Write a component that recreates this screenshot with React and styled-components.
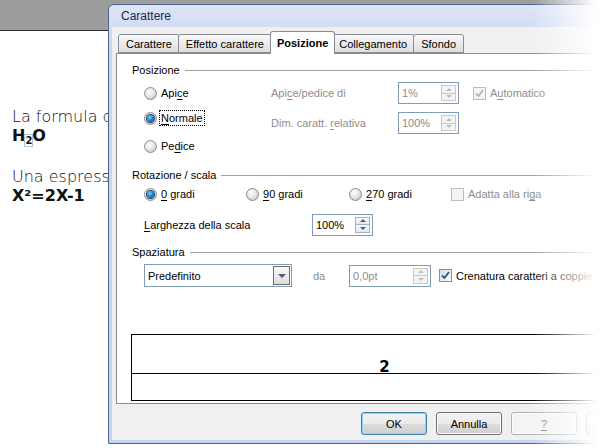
import React from 'react';
import styled, { createGlobalStyle } from 'styled-components';

const UI = '"Liberation Sans", Arial, sans-serif';

const GlobalStyle = createGlobalStyle`
  html, body { margin: 0; padding: 0; background: #fff; }
  body { width: 600px; height: 448px; overflow: hidden; }
  u { text-decoration: underline; text-underline-offset: 2px; }
`;

const Screen = styled.div`
  position: relative;
  width: 600px;
  height: 448px;
  overflow: hidden;
  background: #fff;
`;

const TopBar = styled.div`
  height: 30px;
  background: #9c9c9c;
  border-bottom: 1px solid #2e2e2e;
`;

const Doc = styled.div`
  padding: 76px 0 0 12px;
  font-family: "DejaVu Sans", sans-serif;
  font-size: 16px;
  font-weight: 200;
  color: #111;
`;

const Para = styled.div`
  margin-bottom: 17px;
  line-height: 19px;
  white-space: nowrap;
`;

const Formula = styled.div`
  font-weight: 700;
`;

const Sub = styled.span`
  font-size: 10px;
  vertical-align: -3px;
  outline: 1px solid #a9c4dc;
`;

const Fade = styled.div`
  position: absolute;
  top: 0;
  right: 0;
  width: 68px;
  height: 100%;
  pointer-events: none;
  background: linear-gradient(to right, rgba(255,255,255,0), #fff 95%);
`;

/* dialog window */
const Dialog = styled.div`
  position: absolute;
  left: 108px;
  top: 4px;
  width: 556px;
  height: 440px;
  box-sizing: border-box;
  display: flex;
  flex-direction: column;
  border: 1px solid #4f658c;
  border-radius: 6px 6px 0 0;
  background: linear-gradient(#dde5f7, #cad7f0 40px, #c6d4ef);
  padding: 0 3px 3px;
  font-family: ${UI};
  font-size: 11px;
  color: #000;
`;

const TitleBar = styled.div`
  height: 22px;
  display: flex;
  align-items: center;
  padding-left: 9px;
  font-size: 12px;
  color: #1b2a52;
`;

const Client = styled.div`
  flex: 1;
  background: #f0f0f0;
  padding: 4px 4px 0;
  display: flex;
  flex-direction: column;
`;

const Tabs = styled.div`
  height: 22px;
  display: flex;
  align-items: flex-end;
  padding-left: 2px;
  position: relative;
  z-index: 1;
`;

const Tab = styled.div`
  box-sizing: border-box;
  height: ${p => (p.$active ? 23 : 19)}px;
  margin-bottom: ${p => (p.$active ? -1 : 0)}px;
  margin-right: ${p => (p.$active ? -2 : 0)}px;
  padding: 0 ${p => (p.$active ? 6 : 7)}px;
  display: flex;
  align-items: center;
  border: 1px solid #898c95;
  border-bottom: ${p => (p.$active ? 'none' : '1px solid #898c95')};
  border-radius: 3px 3px 0 0;
  background: ${p => (p.$active ? '#fff' : 'linear-gradient(#fafafa, #ebebeb 50%, #dedede)')};
  font-weight: ${p => (p.$active ? 700 : 400)};
  position: relative;
  z-index: ${p => (p.$active ? 2 : 1)};
  & + & { margin-left: ${p => (p.$active ? -2 : -1)}px; }
`;

const Panel = styled.div`
  height: 351px;
  box-sizing: border-box;
  border: 1px solid #898c95;
  background: #fff;
  padding: 9px 15px 0;
  display: flex;
  flex-direction: column;
`;

const GroupHeader = styled.div`
  display: flex;
  align-items: center;
  gap: 5px;
  height: 14px;
  margin-top: ${p => p.$mt || 0}px;
`;

const Rule = styled.div`
  flex: 1;
  height: 1px;
  background: #a0a0a0;
`;

const PosBody = styled.div`
  display: flex;
  padding-left: 12px;
`;

const LeftCol = styled.div`
  width: 127px;
  display: flex;
  flex-direction: column;
`;

const OptionGrid = styled.div`
  display: grid;
  grid-template-columns: 127px 61px auto;
  grid-auto-rows: 22px;
  row-gap: 8px;
  align-items: center;
  padding-top: 5px;
`;

const Label = styled.span`
  color: ${p => (p.$disabled ? '#8d8d8d' : '#000')};
  white-space: nowrap;
`;

const RadioRow = styled.label`
  display: flex;
  align-items: center;
  gap: 4px;
  height: 16px;
  margin-top: ${p => p.$mt || 0}px;
  white-space: nowrap;
`;

const RadioDot = styled.span`
  width: 13px;
  height: 13px;
  box-sizing: border-box;
  border-radius: 50%;
  border: 1px solid #8b8b8b;
  background: radial-gradient(circle at 40% 35%, #ffffff 0, #e6e6e6 45%, #c9c9c9 80%);
  display: flex;
  align-items: center;
  justify-content: center;
  flex-shrink: 0;
  &::after {
    content: '';
    display: ${p => (p.$on ? 'block' : 'none')};
    width: 7px;
    height: 7px;
    border-radius: 50%;
    background: radial-gradient(circle at 40% 35%, #7fd3ff 0, #1f87d0 45%, #0c3f6e 100%);
    box-shadow: 0 0 0 1px #1d3c5c;
  }
`;

const Focus = styled.span`
  outline: 1px dotted #000;
  outline-offset: 1px;
`;

const CheckRow = styled.label`
  display: flex;
  align-items: center;
  gap: 4px;
  white-space: nowrap;
  margin-left: ${p => p.$ml || 0}px;
`;

const CheckBox = styled.span`
  width: 13px;
  height: 13px;
  box-sizing: border-box;
  border: 1px solid ${p => (p.$disabled ? '#bdbdbd' : '#8f8f8f')};
  background: ${p => (p.$disabled ? '#f4f4f4' : 'linear-gradient(135deg, #dcdcdc, #fbfbfb)')};
  display: flex;
  align-items: center;
  justify-content: center;
  flex-shrink: 0;
`;

const SpinField = styled.div`
  width: ${p => p.$w}px;
  height: 22px;
  box-sizing: border-box;
  border: 1px solid #7f9db9;
  background: #fff;
  display: flex;
  align-items: center;
  justify-content: space-between;
  padding: 2px 2px 2px 3px;
  color: ${p => (p.$disabled ? '#8d8d8d' : '#000')};
  flex-shrink: 0;
`;

const SpinButtons = styled.div`
  width: 15px;
  height: 16px;
  display: flex;
  flex-direction: column;
`;

const SpinHalf = styled.div`
  flex: 1;
  box-sizing: border-box;
  border: 1px solid ${p => (p.$disabled ? '#c9c9c9' : '#9fb0c8')};
  background: ${p => (p.$disabled ? '#f4f4f4' : 'linear-gradient(#fbfbfb, #e3e8f0)')};
  display: flex;
  align-items: center;
  justify-content: center;
  & + & { border-top: none; }
  &::after {
    content: '';
    border-left: 3px solid transparent;
    border-right: 3px solid transparent;
    ${p => (p.$down ? 'border-top' : 'border-bottom')}: 3px solid ${p => (p.$disabled ? '#bdbdbd' : '#3f5f8f')};
  }
`;

const RotRow = styled.div`
  display: grid;
  grid-template-columns: 102px 103px 102px auto;
  align-items: center;
  height: 16px;
  padding-left: 12px;
  margin-top: 4px;
`;

const FieldRow = styled.div`
  display: flex;
  align-items: center;
  padding-left: 12px;
  height: 23px;
  margin-top: ${p => p.$mt || 0}px;
`;

const FieldLabel = styled.span`
  box-sizing: border-box;
  width: ${p => p.$w}px;
  padding-left: ${p => p.$pl || 0}px;
  color: ${p => (p.$disabled ? '#8d8d8d' : '#000')};
  white-space: nowrap;
  flex-shrink: 0;
`;

const Select = styled.div`
  width: 148px;
  height: 23px;
  box-sizing: border-box;
  border: 1px solid #7f9db9;
  background: #fff;
  display: flex;
  align-items: center;
  justify-content: space-between;
  padding: 1px 1px 1px 3px;
  flex-shrink: 0;
`;

const SelectButton = styled.div`
  width: 17px;
  height: 19px;
  box-sizing: border-box;
  border: 1px solid #6c6c6c;
  background: linear-gradient(#fafafa, #dcdcdc);
  display: flex;
  align-items: center;
  justify-content: center;
  &::after {
    content: '';
    border-left: 4px solid transparent;
    border-right: 4px solid transparent;
    border-top: 4px solid #4c5a73;
  }
`;

const Preview = styled.div`
  margin-top: 47px;
  margin-left: -1px;
  height: 67px;
  box-sizing: border-box;
  border: 1px solid #000;
  display: flex;
  flex-direction: column;
`;

const PreviewTop = styled.div`
  height: 38px;
  border-bottom: 1px solid #000;
  display: flex;
  justify-content: center;
  align-items: flex-end;
`;

const PreviewGlyph = styled.span`
  font-family: "DejaVu Sans", sans-serif;
  font-weight: 700;
  font-size: 15px;
  line-height: 11px;
  margin-left: -2px;
`;

const ButtonRow = styled.div`
  display: flex;
  justify-content: flex-end;
  gap: 9px;
  margin-top: 8px;
  padding-right: 4px;
`;

const Button = styled.button`
  width: 66px;
  height: 23px;
  box-sizing: border-box;
  font-family: ${UI};
  font-size: 11px;
  border-radius: 3px;
  border: 1px solid ${p => (p.$default ? '#3c7fb1' : p.disabled ? '#adb2b5' : '#707070')};
  box-shadow: ${p => (p.$default ? 'inset 0 0 0 1px #8fd6f6' : 'inset 0 0 0 1px #fcfcfc')};
  background: ${p => (p.disabled ? '#f4f4f4' : 'linear-gradient(#f2f2f2 0, #ebebeb 50%, #dddddd 50%, #cfcfcf 100%)')};
  color: ${p => (p.disabled ? '#838383' : '#000')};
  padding: 0;
  flex-shrink: 0;
  white-space: nowrap;
  overflow: hidden;
`;

const Check = ({ on, disabled }) => (
  <CheckBox $disabled={disabled}>
    {on && (
      <svg width="9" height="9" viewBox="0 0 9 9">
        <path d="M1 4.5 L3.5 7 L8 1" fill="none" stroke={disabled ? '#b4b4b4' : '#2b4f91'} strokeWidth="1.8" />
      </svg>
    )}
  </CheckBox>
);

const Spin = ({ w, value, disabled }) => (
  <SpinField $w={w} $disabled={disabled}>
    <span>{value}</span>
    <SpinButtons>
      <SpinHalf $disabled={disabled} />
      <SpinHalf $disabled={disabled} $down />
    </SpinButtons>
  </SpinField>
);

const Radio = ({ on, mt, children }) => (
  <RadioRow $mt={mt}>
    <RadioDot $on={on} />
    <span>{children}</span>
  </RadioRow>
);

export default function App() {
  return (
    <Screen>
      <GlobalStyle />
      <TopBar />
      <Doc>
        <Para>
          La formula dell'acqua è
          <Formula>H<Sub>2</Sub>O</Formula>
        </Para>
        <Para>
          Una espressione matematica
          <Formula>X²=2X-1</Formula>
        </Para>
      </Doc>

      <Dialog>
        <TitleBar>Carattere</TitleBar>
        <Client>
          <Tabs>
            <Tab>Carattere</Tab>
            <Tab>Effetto carattere</Tab>
            <Tab $active>Posizione</Tab>
            <Tab>Collegamento</Tab>
            <Tab>Sfondo</Tab>
          </Tabs>
          <Panel>
            <GroupHeader>
              <Label>Posizione</Label>
              <Rule />
            </GroupHeader>
            <PosBody>
              <LeftCol>
                <Radio mt={8}>Api<u>c</u>e</Radio>
                <Radio mt={9} on><Focus><u>N</u>ormale</Focus></Radio>
                <Radio mt={12}>Pe<u>d</u>ice</Radio>
              </LeftCol>
              <OptionGrid>
                <Label $disabled>Api<u>c</u>e/pedice di</Label>
                <Spin w={61} value="1%" disabled />
                <CheckRow $ml={14}>
                  <Check on disabled />
                  <Label $disabled>A<u>u</u>tomatico</Label>
                </CheckRow>
                <Label $disabled>Dim. caratt. <u>r</u>elativa</Label>
                <Spin w={61} value="100%" disabled />
              </OptionGrid>
            </PosBody>

            <GroupHeader $mt={14}>
              <Label>Rotazione / scala</Label>
              <Rule />
            </GroupHeader>
            <RotRow>
              <Radio on><u>0</u> gradi</Radio>
              <Radio><u>9</u>0 gradi</Radio>
              <Radio><u>2</u>70 gradi</Radio>
              <CheckRow>
                <Check disabled />
                <Label $disabled>Adatta alla ri<u>g</u>a</Label>
              </CheckRow>
            </RotRow>
            <FieldRow $mt={11}>
              <FieldLabel $w={168}><u>L</u>arghezza della scala</FieldLabel>
              <Spin w={61} value="100%" />
            </FieldRow>

            <GroupHeader $mt={9}>
              <Label>Spaziatura</Label>
              <Rule />
            </GroupHeader>
            <FieldRow $mt={5}>
              <Select>
                <span>Predefinito</span>
                <SelectButton />
              </Select>
              <FieldLabel $w={57} $pl={21} $disabled>da</FieldLabel>
              <Spin w={82} value="0,0pt" disabled />
              <CheckRow $ml={8}>
                <Check on />
                <Label>Crenatura caratteri a coppie</Label>
              </CheckRow>
            </FieldRow>

            <Preview>
              <PreviewTop>
                <PreviewGlyph>2</PreviewGlyph>
              </PreviewTop>
            </Preview>
          </Panel>
          <ButtonRow>
            <Button $default>OK</Button>
            <Button>Annulla</Button>
            <Button disabled><u>?</u></Button>
            <Button>Ripristina</Button>
          </ButtonRow>
        </Client>
      </Dialog>
      <Fade />
    </Screen>
  );
}
